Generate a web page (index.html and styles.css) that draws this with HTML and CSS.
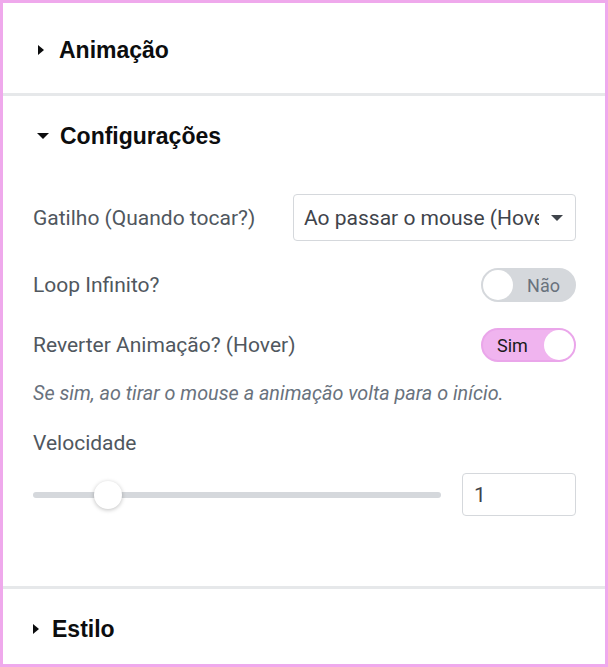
FILE: index.html
```html
<!DOCTYPE html>
<html lang="pt">
<head>
    <meta charset="UTF-8">
    <meta name="viewport" content="width=device-width, initial-scale=1.0">
    <title>Configurações</title>
    <link rel="stylesheet" href="styles.css">
</head>
<body>
    <div class="panel">
        <div class="section">
            <div class="section-head">
                <span class="caret caret-right"></span>
                <span class="section-title">Animação</span>
            </div>
        </div>

        <div class="section section-open">
            <div class="section-head">
                <span class="caret caret-down"></span>
                <span class="section-title">Configurações</span>
            </div>

            <div class="controls">
                <div class="row row-select">
                    <label class="label">Gatilho (Quando tocar?)</label>
                    <div class="select">
                        <span class="select-text">Ao passar o mouse (Hover)</span>
                        <span class="select-arrow"></span>
                    </div>
                </div>

                <div class="row row-switch">
                    <label class="label">Loop Infinito?</label>
                    <div class="switch">
                        <span class="switch-knob"></span>
                        <span class="switch-text">Não</span>
                    </div>
                </div>

                <div class="row row-switch">
                    <label class="label">Reverter Animação? (Hover)</label>
                    <div class="switch on">
                        <span class="switch-text">Sim</span>
                        <span class="switch-knob"></span>
                    </div>
                </div>

                <p class="hint">Se sim, ao tirar o mouse a animação volta para o início.</p>

                <label class="label label-block">Velocidade</label>
                <div class="row row-slider">
                    <div class="slider">
                        <div class="slider-track"></div>
                        <div class="slider-thumb" style="left: 15%;"></div>
                    </div>
                    <div class="number">1</div>
                </div>
            </div>
        </div>

        <div class="section section-last">
            <div class="section-head">
                <span class="caret caret-right"></span>
                <span class="section-title">Estilo</span>
            </div>
        </div>
    </div>
</body>
</html>
```

FILE: styles.css
```css
body {
    margin: 0;
    padding: 0;
    background: #ffffff;
    font-family: Roboto, "Liberation Sans", sans-serif;
}
.panel {
    width: 608px;
    height: 667px;
    box-sizing: border-box;
    border: 3px solid #efa9ec;
    display: flex;
    flex-direction: column;
    background: #ffffff;
}
.section {
    border-bottom: 3px solid #e6e8ea;
}
.section-last {
    border-bottom: none;
    flex: 1;
}
.section-head {
    height: 90px;
    display: flex;
    align-items: center;
    padding-left: 35px;
    padding-top: 4px;
    box-sizing: border-box;
}
.section-open .section-head {
    height: 80px;
    padding-left: 32px;
    padding-top: 0;
}
.section-last .section-head {
    height: 74px;
    padding-left: 30px;
    padding-top: 6px;
}
.section-title {
    font-family: "Liberation Sans", Arial, sans-serif;
    font-weight: bold;
    font-size: 23px;
    color: #0c0d0e;
    margin-left: 15px;
}
.section-open .section-title {
    margin-left: 11px;
}
.section-last .section-title {
    margin-left: 13px;
}
.caret {
    width: 0;
    height: 0;
    display: inline-block;
}
.caret-right {
    border-top: 5px solid transparent;
    border-bottom: 5px solid transparent;
    border-left: 6px solid #0c0d0e;
}
.caret-down {
    border-left: 6px solid transparent;
    border-right: 6px solid transparent;
    border-top: 6px solid #0c0d0e;
    margin-left: 2px;
}
.controls {
    padding: 18px 29px 70px 30px;
}
.row {
    display: flex;
    align-items: center;
    justify-content: space-between;
}
.label {
    font-size: 21px;
    color: #50575e;
}
.label-block {
    display: block;
    margin-top: 25px;
    line-height: 24px;
}
.select {
    width: 283px;
    height: 47px;
    box-sizing: border-box;
    border: 1px solid #d5d8dc;
    border-radius: 4px;
    display: flex;
    align-items: center;
    padding: 0 12px 0 10px;
}
.select-text {
    flex: 1;
    overflow: hidden;
    white-space: nowrap;
    font-size: 21px;
    color: #3f444b;
}
.select-arrow {
    width: 0;
    height: 0;
    margin-left: 12px;
    border-left: 6px solid transparent;
    border-right: 6px solid transparent;
    border-top: 6px solid #3f444b;
}
.row-switch {
    margin-top: 27px;
}
.row-switch + .row-switch {
    margin-top: 26px;
}
.switch {
    width: 95px;
    height: 34px;
    box-sizing: border-box;
    border-radius: 17px;
    background: #d5d8dc;
    border: 2px solid #d5d8dc;
    display: flex;
    align-items: center;
    justify-content: space-between;
}
.switch-knob {
    width: 30px;
    height: 30px;
    border-radius: 50%;
    background: #ffffff;
}
.switch-text {
    font-size: 18px;
    color: #69727d;
    padding: 0 14px 0 12px;
}
.switch.on {
    background: #f0b4ef;
    border-color: #eaa6ea;
}
.switch.on .switch-text {
    color: #1a1a1a;
    padding: 0 10px 0 14px;
}
.hint {
    margin: 20px 0 0 0;
    font-size: 19.8px;
    font-style: italic;
    color: #69727d;
    line-height: 24px;
}
.row-slider {
    margin-top: 18px;
}
.slider {
    position: relative;
    width: 408px;
    height: 28px;
    display: flex;
    align-items: center;
}
.slider-track {
    width: 100%;
    height: 6px;
    border-radius: 3px;
    background: #d5d8dc;
}
.slider-thumb {
    position: absolute;
    top: 0;
    width: 28px;
    height: 28px;
    border-radius: 50%;
    background: #ffffff;
    box-shadow: 0 1px 4px rgba(0, 0, 0, 0.25);
}
.number {
    width: 114px;
    height: 43px;
    box-sizing: border-box;
    border: 1px solid #d5d8dc;
    border-radius: 4px;
    font-size: 21px;
    color: #3f444b;
    display: flex;
    align-items: center;
    padding-left: 11px;
}
```
